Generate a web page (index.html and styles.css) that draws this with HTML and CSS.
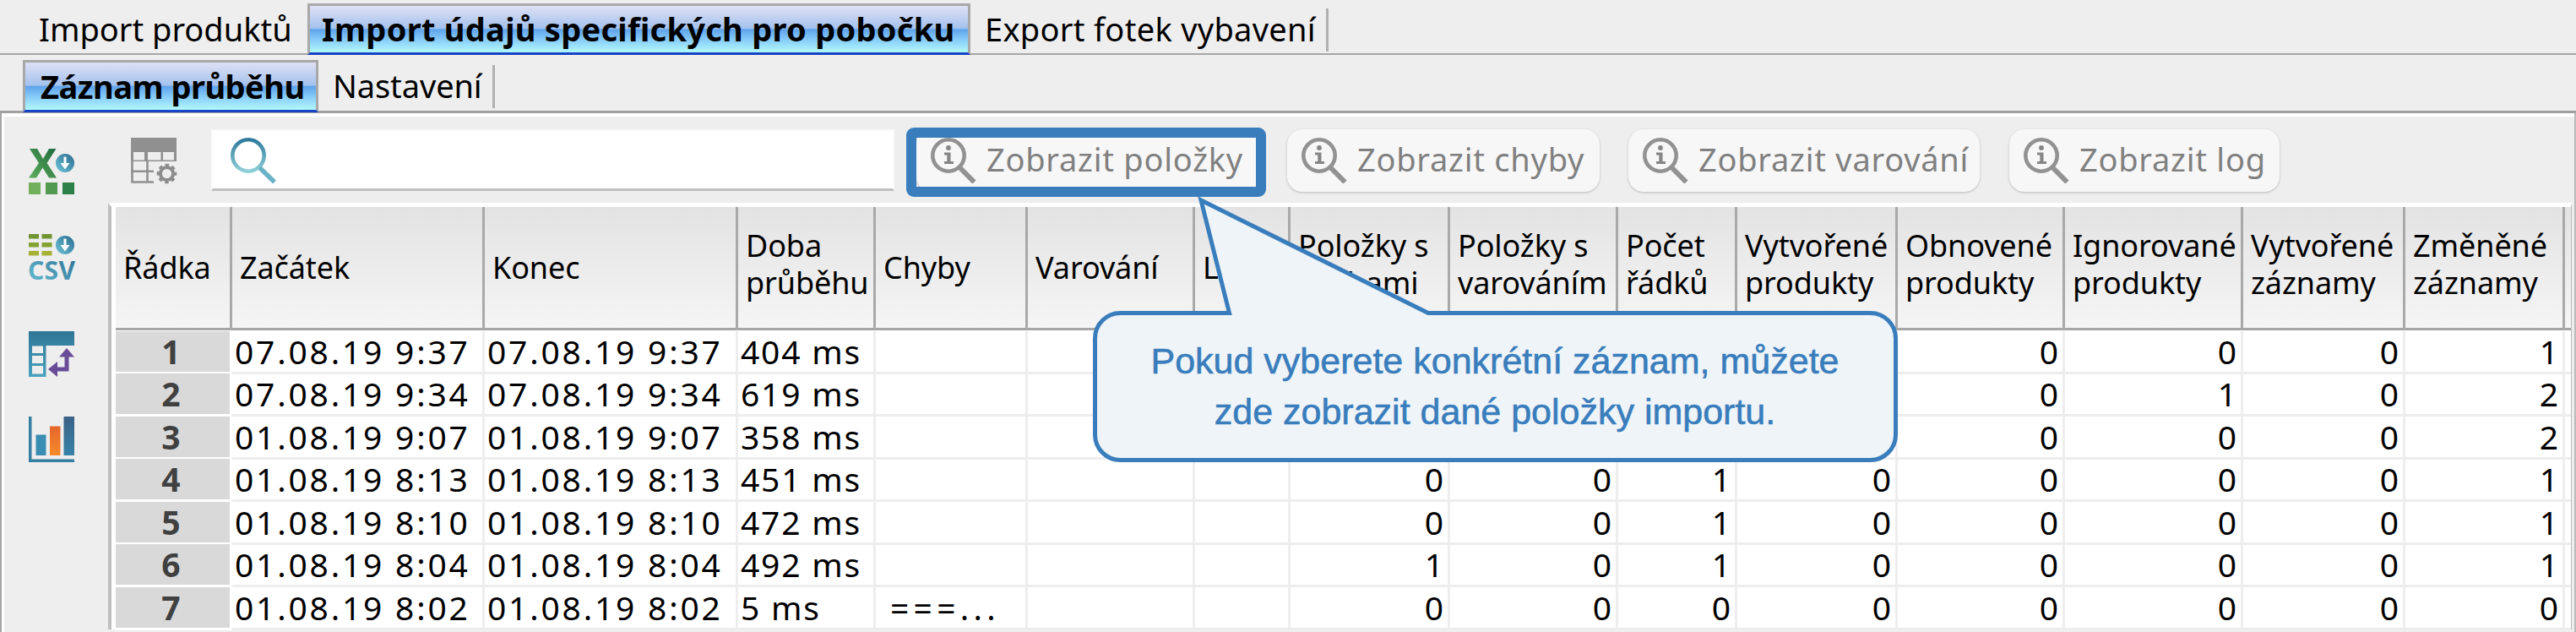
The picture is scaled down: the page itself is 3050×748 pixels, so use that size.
FILE: index.html
```html
<!DOCTYPE html>
<html lang="cs">
<head>
    <meta charset="UTF-8">
    <meta name="viewport" content="width=device-width, initial-scale=1.0">
    <title>Import údajů specifických pro pobočku</title>
    <link rel="stylesheet" href="styles.css">
</head>
<body>
    <svg class="defs" width="0" height="0">
        <defs>
            <linearGradient id="green" x1="0" y1="1" x2="1" y2="0"><stop offset="0" stop-color="#5fae5a"/><stop offset="1" stop-color="#1f6a3f"/></linearGradient>
            <linearGradient id="blue" x1="0" y1="1" x2="1" y2="0"><stop offset="0" stop-color="#6cc5d8"/><stop offset="1" stop-color="#2a6a8f"/></linearGradient>
            <linearGradient id="lens" x1="0" y1="1" x2="0" y2="0"><stop offset="0" stop-color="#8fd0d8"/><stop offset="1" stop-color="#2f7a9c"/></linearGradient>
            <linearGradient id="teal" x1="0" y1="0" x2="0" y2="1"><stop offset="0" stop-color="#2f7596"/><stop offset="1" stop-color="#4ba3be"/></linearGradient>
            <linearGradient id="navy" x1="0" y1="0" x2="0" y2="1"><stop offset="0" stop-color="#3b6185"/><stop offset="1" stop-color="#3883a8"/></linearGradient>
            <linearGradient id="orange" x1="0" y1="0" x2="0" y2="1"><stop offset="0" stop-color="#e5662b"/><stop offset="1" stop-color="#f58a2b"/></linearGradient>
            <symbol id="down" viewBox="0 0 22 22">
                <circle cx="11" cy="11" r="11" fill="url(#blue)"/>
                <path d="M9.5 3.5h3V11h4L11 18.5 5.5 11h4z" fill="#fff"/>
            </symbol>
            <symbol id="info" viewBox="0 0 54 54">
                <circle cx="21" cy="21" r="18.7" fill="none" stroke="#929292" stroke-width="4.6"/>
                <path d="M34.5 35.5 51.5 52.5" stroke="#929292" stroke-width="6"/>
                <circle cx="21" cy="12" r="2.9" fill="#868686"/>
                <path d="M16 17.5h7.500v10.500h3.500v3h-11v-3h3.300v-7.500H16z" fill="#868686"/>
            </symbol>
        </defs>
    </svg>

    <nav class="tabs tabs-main">
        <div class="tab tab-import">Import produktů</div>
        <div class="tab active tab-branch">Import údajů specifických pro pobočku</div>
        <div class="tab last tab-export">Export fotek vybavení</div>
    </nav>
    <nav class="tabs tabs-sub">
        <div class="tab active tab-log">Záznam průběhu</div>
        <div class="tab last tab-settings">Nastavení</div>
    </nav>

    <main class="panel">
        <aside class="sidebar">
            <svg class="icon" viewBox="0 0 54 54">
                <path d="M1 0h9l7 12 7-12h8.500L21.500 17 33 34.500h-9L16.500 22.500 9 34.500H0L12 17z" fill="url(#green)"/>
                <use href="#down" x="32" y="6" width="22" height="22"/>
                <rect x="0" y="40" width="14" height="14" fill="#73b05c"/>
                <rect x="20" y="40" width="14" height="14" fill="#529a52"/>
                <rect x="40" y="40" width="14" height="14" fill="#2c8047"/>
            </svg>
            <svg class="icon" viewBox="0 0 54 54">
                <path d="M0 0h12v5.500H0zM15.500 0h12v5.500h-12z" fill="#6f9430"/>
                <path d="M0 10h12v5.500H0zM15.500 10h12v5.500h-12z" fill="#84a232"/>
                <path d="M0 20h12v5.500H0zM15.500 20h12v5.500h-12z" fill="#a5b235"/>
                <use href="#down" x="32" y="2" width="22" height="22"/>
                <text x="-1" y="53.500" class="csv" textLength="56" fill="url(#blue)">CSV</text>
            </svg>
            <svg class="icon pivot" viewBox="0 0 54 54">
                <path d="M0 0h54v17H20.500v37H0zM4 17.500v8.500h13v-8.500zM4 29v9h13v-9zM4 41v9.500h13V41z" fill="url(#teal)" fill-rule="evenodd"/>
                <path d="M45 20l9 10.500h-6.500V47.500H34v6.500L23 45l11-9v6.500h8.500V30.500H36z" fill="#684c97"/>
            </svg>
            <svg class="icon" viewBox="0 0 54 54">
                <path d="M0 0h3.500v50.500H54V54H0z" fill="#357fa3"/>
                <path d="M8.500 21.500h12V46h-12z" fill="#3a8db3"/>
                <path d="M25 11.500h12.500V46H25z" fill="url(#orange)"/>
                <path d="M41.500 0H54v46H41.500z" fill="url(#navy)"/>
            </svg>
        </aside>

        <div class="content">
            <div class="toolbar">
                <svg class="icon" viewBox="0 0 54 54">
                    <path d="M0 0h54v28H0zM3 17v9.500h13V17zM20 17v9.500h15.500V17zM38 17v9.500h13V17z" fill="#909090" fill-rule="evenodd"/>
                    <path d="M1.500 26v26.500H27M0 39.700h27M19.500 27v25" fill="none" stroke="#909090" stroke-width="2.600"/>
                    <circle cx="42.500" cy="42.500" r="7.600" fill="none" stroke="#8c8c8c" stroke-width="4"/>
                    <circle cx="42.500" cy="42.500" r="10.200" fill="none" stroke="#8c8c8c" stroke-width="3.200" stroke-dasharray="4.400 3.610" stroke-dashoffset="2.200"/>
                </svg>
                <div class="search">
                    <svg class="icon" viewBox="0 0 54 54">
                        <circle cx="21" cy="21" r="18.700" fill="none" stroke="url(#lens)" stroke-width="4.600"/>
                        <path d="M34.500 35.500 52 52.500" stroke="#69b3c6" stroke-width="5.500"/>
                    </svg>
                </div>
                <div class="btn btn-items"><svg class="icon"><use href="#info"/></svg><span>Zobrazit položky</span></div>
                <div class="btn btn-errors"><svg class="icon"><use href="#info"/></svg><span>Zobrazit chyby</span></div>
                <div class="btn btn-warnings"><svg class="icon"><use href="#info"/></svg><span>Zobrazit varování</span></div>
                <div class="btn btn-log"><svg class="icon"><use href="#info"/></svg><span>Zobrazit log</span></div>
            </div>

            <div class="table">
                <div class="row head">
                    <div>Řádka</div>
                    <div>Začátek</div>
                    <div>Konec</div>
                    <div class="two">Doba<br>průběhu</div>
                    <div>Chyby</div>
                    <div>Varování</div>
                    <div>Log</div>
                    <div class="two">Položky s<br>chybami</div>
                    <div class="two">Položky s<br>varováním</div>
                    <div class="two">Počet<br>řádků</div>
                    <div class="two">Vytvořené<br>produkty</div>
                    <div class="two">Obnovené<br>produkty</div>
                    <div class="two">Ignorované<br>produkty</div>
                    <div class="two">Vytvořené<br>záznamy</div>
                    <div class="two">Změněné<br>záznamy</div>
                    <div></div>
                </div>
                <div class="row"><b>1</b><i>07.08.19 9:37</i><i>07.08.19 9:37</i><i class="ms">404 ms</i><i></i><i></i><i></i><u></u><u></u><u></u><u></u><u>0</u><u>0</u><u>0</u><u>1</u><i></i></div>
                <div class="row"><b>2</b><i>07.08.19 9:34</i><i>07.08.19 9:34</i><i class="ms">619 ms</i><i></i><i></i><i></i><u></u><u></u><u></u><u></u><u>0</u><u>1</u><u>0</u><u>2</u><i></i></div>
                <div class="row"><b>3</b><i>01.08.19 9:07</i><i>01.08.19 9:07</i><i class="ms">358 ms</i><i></i><i></i><i></i><u></u><u></u><u></u><u></u><u>0</u><u>0</u><u>0</u><u>2</u><i></i></div>
                <div class="row"><b>4</b><i>01.08.19 8:13</i><i>01.08.19 8:13</i><i class="ms">451 ms</i><i></i><i></i><i></i><u>0</u><u>0</u><u>1</u><u>0</u><u>0</u><u>0</u><u>0</u><u>1</u><i></i></div>
                <div class="row"><b>5</b><i>01.08.19 8:10</i><i>01.08.19 8:10</i><i class="ms">472 ms</i><i></i><i></i><i></i><u>0</u><u>0</u><u>1</u><u>0</u><u>0</u><u>0</u><u>0</u><u>1</u><i></i></div>
                <div class="row"><b>6</b><i>01.08.19 8:04</i><i>01.08.19 8:04</i><i class="ms">492 ms</i><i></i><i></i><i></i><u>1</u><u>0</u><u>1</u><u>0</u><u>0</u><u>0</u><u>0</u><u>1</u><i></i></div>
                <div class="row"><b>7</b><i>01.08.19 8:02</i><i>01.08.19 8:02</i><i class="ms">5 ms</i><i class="err">===...</i><i></i><i></i><u>0</u><u>0</u><u>0</u><u>0</u><u>0</u><u>0</u><u>0</u><u>0</u><i></i></div>
            </div>
        </div>
    </main>

    <div class="highlight"></div>
    <div class="callout">
        <svg class="callout-shape" viewBox="0 0 960 320">
            <path d="M130 6 163.500 139.500H35A30 30 0 0 0 4.500 170V283.500A30 30 0 0 0 35 313.500H922A30 30 0 0 0 952.500 283.500V170A30 30 0 0 0 922 139.500H399Z" fill="#eef4f8" stroke="#397dbc" stroke-width="5"/>
        </svg>
        <p class="callout-text">Pokud vyberete konkrétní záznam, můžete<br>zde zobrazit dané položky importu.</p>
    </div>
</body>
</html>
```

FILE: styles.css
```css
* {
    box-sizing: border-box;
}
body {
    margin: 0;
    height: 748px;
    overflow: hidden;
    position: relative;
    background-color: #eee;
    color: #000;
    font-family: "Noto Sans", sans-serif;
    font-size: 38px;
    white-space: nowrap;
}
.defs {
    position: absolute;
}
.icon {
    display: block;
    flex: none;
    width: 54px;
    height: 54px;
    overflow: visible;
}

/* tabs */
.tabs {
    display: flex;
    align-items: flex-end;
}
.tabs-main {
    height: 65px;
    border-bottom: 2px solid #a6a6a6;
}
.tabs-sub {
    height: 69px;
    padding-left: 27px;
    border-bottom: 3px solid #a0a0a0;
}
.tab {
    height: 59px;
    line-height: 60px;
    position: relative;
}
.tab.active {
    height: 61px;
    line-height: 54px;
    margin-bottom: -2px;
    font-weight: bold;
    border: 3px solid #a8a8a8;
    border-bottom-color: #1743c4;
    background: linear-gradient(#dfe1f4 0%, #a4c2ee 48%, #5fa3ec 51%, #86cbf8 72%, #b2f9fd 100%);
}
.tab.last {
    border-right: 3px solid #b0b0b0;
    height: 51px;
    line-height: 49px;
    margin-bottom: 2px;
}
.tab-import {
    width: 364px;
    padding-left: 46px;
}
.tab-branch {
    width: 785px;
    padding-left: 14px;
    letter-spacing: 0.27px;
}
.tab-export {
    width: 424px;
    padding-left: 17px;
    letter-spacing: 0.3px;
}
.tab-log {
    width: 350px;
    padding-left: 18px;
    letter-spacing: -0.5px;
}
.tabs-sub .tab.active {
    height: 62px;
    line-height: 56px;
}
.tab-settings {
    width: 209px;
    padding-left: 17px;
    letter-spacing: -0.1px;
}
.tabs-sub .tab.last {
    margin-bottom: 3px;
}

/* panel */
.panel {
    display: flex;
    height: 614px;
    border-left: 2px solid #a6a6a6;
    border-right: 2px solid #bbb;
    box-shadow: inset 3px 4px 0 #fff;
}
.sidebar {
    flex: none;
    width: 126px;
    padding: 42px 0 0 32px;
    display: flex;
    flex-direction: column;
    gap: 47px;
}
.pivot {
    margin-top: 14px;
}
.csv {
    font: bold 30px "Noto Sans", sans-serif;
}
.content {
    flex: 1;
    min-width: 0;
    padding-top: 4px;
    margin-right: 3px;
}

/* toolbar */
.toolbar {
    display: flex;
    height: 102px;
    padding: 15px 0 0 27px;
}
.toolbar > .icon {
    margin-top: 10px;
}
.search {
    width: 809px;
    height: 73px;
    margin-left: 41px;
    padding: 8px 21px;
    background-color: #fff;
    border: 2px solid #fafafa;
    border-bottom: 3px solid #c0c0c0;
}
.btn {
    display: flex;
    gap: 12px;
    height: 74px;
    padding: 10px 0 0 17px;
    border-radius: 18px;
    background-color: #f7f7f7;
    box-shadow: 0 1px 3px rgba(0, 0, 0, 0.22);
    color: #808080;
    line-height: 51px;
    letter-spacing: 0.75px;
}
.btn-items {
    width: 406px;
    margin-left: 26px;
}
.btn-errors {
    width: 370px;
    margin-left: 33px;
}
.btn-warnings {
    width: 416px;
    margin-left: 34px;
}
.btn-log {
    width: 320px;
    margin-left: 35px;
}

/* table */
.table {
    height: 505px;
    border-left: 4px solid #bfbfbf;
    border-top: 5px solid #fff;
    border-right: 1px solid #bbb;
    padding-left: 5px;
    background-color: #fff;
}
.row {
    display: grid;
    grid-template-columns: 138px 299px 300px 163px 180px 198px 113px 189px 199px 141px 190px 198px 211px 192px 189px 1fr;
    height: 50.45px;
    font-size: 39px;
    line-height: 48px;
}
.row.head {
    height: 147px;
    border-bottom: 2px solid #fff;
    font-size: 36px;
    line-height: 143px;
    letter-spacing: -0.1px;
}
.head div {
    padding-left: 9px;
    border-right: 3px solid #a9a9a9;
    border-bottom: 3px solid #a6a6a6;
    background: linear-gradient(#e3e3e3, #f5f5f5);
}
.head .two {
    padding-top: 24px;
    line-height: 44px;
}
.row b,
.row i,
.row u {
    border-bottom: 3px solid #ededed;
    border-right: 3px solid #eee;
    font-style: normal;
    text-decoration: none;
}
.row b {
    background-color: #d9d9d9;
    border-color: #fff;
    color: #404040;
    text-align: center;
    padding-right: 4px;
}
.row i {
    padding-left: 3px;
    letter-spacing: 2.8px;
}
.row i.ms {
    letter-spacing: 1.8px;
}
.row i.err {
    padding-left: 17px;
    letter-spacing: 5.3px;
}
.row u {
    padding-right: 5px;
    text-align: right;
}
.head div:last-child,
.row i:last-child {
    padding-left: 0;
    border-right: 0;
}

/* highlighted button and its callout */
.highlight {
    position: absolute;
    left: 1073px;
    top: 151px;
    width: 426px;
    height: 82px;
    border: 12px solid #397dbc;
    border-radius: 9px;
}
.callout {
    position: absolute;
    left: 1292px;
    top: 231px;
    width: 960px;
    height: 320px;
}
.callout-shape {
    position: absolute;
    inset: 0;
}
.callout-text {
    position: relative;
    margin: 0;
    padding: 166px 4px 0 0;
    text-align: center;
    color: #397dbc;
    font: 43px/60px "Liberation Sans", sans-serif;
    -webkit-text-stroke: 0.6px #397dbc;
}
```
